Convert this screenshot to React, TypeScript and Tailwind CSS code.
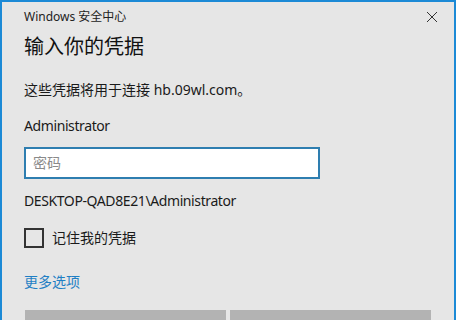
import React from 'react';

const font = { fontFamily: '"Noto Sans", "Noto Sans CJK SC", sans-serif' };

export default function App() {
    return (
        <div
            className="w-[456px] h-[320px] overflow-hidden bg-[#e6e6e6] border-x-2 border-t-2 border-[#1c8ad6] text-[#1a1a1a]"
            style={font}
        >
            {/* Title bar */}
            <div className="flex items-center justify-between pl-[22px] pr-[14px] h-[30px]">
                <span className="text-[12px] leading-none text-[#222]">Windows 安全中心</span>
                <svg width="12" height="12" viewBox="0 0 12 12" className="mr-[2px]">
                    <path d="M1 1 L11 11 M11 1 L1 11" stroke="#333" strokeWidth="1" fill="none" />
                </svg>
            </div>

            <div className="flex flex-col items-start pl-[22px] pr-[23px]">
                <h1 className="text-[20px] leading-[20px] mt-[5px] text-[#111]">输入你的凭据</h1>

                <p className="text-[14px] leading-[14px] mt-[26px]">这些凭据将用于连接 hb.09wl.com。</p>

                <p className="text-[14px] leading-[14px] tracking-[-0.4px] mt-[22px]">Administrator</p>

                <div className="shrink-0 mt-[14px] w-[296px] h-[32px] bg-white border-2 border-[#2e7eb0] flex items-center px-[7px]">
                    <span className="text-[14px] leading-none text-[#8a8a8a]">密码</span>
                </div>

                <p className="text-[14px] leading-[14px] tracking-[-0.4px] mt-[15px]">DESKTOP-QAD8E21\Administrator</p>

                <div className="flex items-center gap-[8px] mt-[20px]">
                    <div className="shrink-0 w-[20px] h-[20px] border-2 border-[#333]" />
                    <span className="text-[14px] leading-none">记住我的凭据</span>
                </div>

                <span className="text-[14px] leading-[14px] text-[#1f7fc4] mt-[27px]">更多选项</span>

                <div className="flex gap-[4px] mt-[21px] pl-[1px]">
                    <div className="shrink-0 w-[201px] h-[30px] bg-[#b3b3b3]" />
                    <div className="shrink-0 w-[201px] h-[30px] bg-[#b3b3b3]" />
                </div>
            </div>
        </div>
    );
}
